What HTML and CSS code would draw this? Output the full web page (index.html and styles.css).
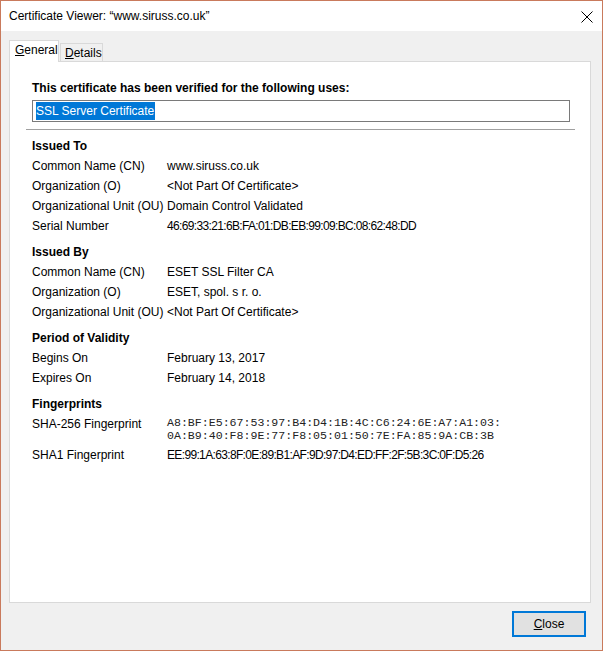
FILE: index.html
```html
<!DOCTYPE html>
<html lang="en">
<head>
<meta charset="utf-8">
<title>Certificate Viewer</title>
<link rel="stylesheet" href="styles.css">
</head>
<body>
<div class="window">
  <div class="titlebar">
    <span class="title">Certificate Viewer: &ldquo;www.siruss.co.uk&rdquo;</span>
    <svg class="closex" width="12" height="12" viewBox="0 0 12 12"><path d="M0.5 0.5 L11.5 11.5 M11.5 0.5 L0.5 11.5" stroke="#000" stroke-width="1" fill="none"/></svg>
  </div>
  <div class="client">
    <div class="tabs">
      <span class="tab active"><u>G</u>eneral</span>
      <span class="tab"><u>D</u>etails</span>
    </div>
    <div class="panel">
      <p class="verified">This certificate has been verified for the following uses:</p>
      <div class="uses"><span class="sel">SSL Server Certificate</span></div>
      <div class="sep"></div>

      <div class="section">
        <div class="head">Issued To</div>
        <div class="row"><span class="lbl">Common Name (CN)</span><span>www.siruss.co.uk</span></div>
        <div class="row"><span class="lbl">Organization (O)</span><span>&lt;Not Part Of Certificate&gt;</span></div>
        <div class="row"><span class="lbl">Organizational Unit (OU)</span><span>Domain Control Validated</span></div>
        <div class="row"><span class="lbl">Serial Number</span><span class="hex">46:69:33:21:6B:FA:01:DB:EB:99:09:BC:08:62:48:DD</span></div>
      </div>

      <div class="section">
        <div class="head">Issued By</div>
        <div class="row"><span class="lbl">Common Name (CN)</span><span>ESET SSL Filter CA</span></div>
        <div class="row"><span class="lbl">Organization (O)</span><span>ESET, spol. s r. o.</span></div>
        <div class="row"><span class="lbl">Organizational Unit (OU)</span><span>&lt;Not Part Of Certificate&gt;</span></div>
      </div>

      <div class="section">
        <div class="head">Period of Validity</div>
        <div class="row"><span class="lbl">Begins On</span><span>February 13, 2017</span></div>
        <div class="row"><span class="lbl">Expires On</span><span>February 14, 2018</span></div>
      </div>

      <div class="section">
        <div class="head">Fingerprints</div>
        <div class="row"><span class="lbl">SHA-256 Fingerprint</span><span class="mono">A8:BF:E5:67:53:97:B4:D4:1B:4C:C6:24:6E:A7:A1:03:<br>0A:B9:40:F8:9E:77:F8:05:01:50:7E:FA:85:9A:CB:3B</span></div>
        <div class="row"><span class="lbl">SHA1 Fingerprint</span><span class="hex">EE:99:1A:63:8F:0E:89:B1:AF:9D:97:D4:ED:FF:2F:5B:3C:0F:D5:26</span></div>
      </div>
    </div>
    <div class="buttons">
      <button class="btn"><u>C</u>lose</button>
    </div>
  </div>
</div>
</body>
</html>
```
FILE: styles.css
```css
body {
	margin: 0;
	font-family: "Liberation Sans", Arial, sans-serif;
	font-size: 12px;
	color: #000;
}
.window {
	width: 603px;
	height: 651px;
	box-sizing: border-box;
	border: 1px solid #c97a5c;
	display: flex;
	flex-direction: column;
	background: #f0f0f0;
}
.titlebar {
	height: 30px;
	background: #fff;
	display: flex;
	align-items: center;
	justify-content: space-between;
	padding: 0 9px 0 8px;
}
.title {
	font-size: 12px;
}
.closex {
	margin-top: 1px;
}
.client {
	flex: 1;
	display: flex;
	flex-direction: column;
	padding: 10px 11px 0 8px;
}
.tabs {
	display: flex;
	align-items: flex-end;
	height: 21px;
	margin-bottom: -1px;
}
.tab {
	box-sizing: border-box;
	height: 19px;
	width: 43px;
	border: 1px solid #d9d9d9;
	border-bottom: none;
	padding-left: 4px;
	line-height: 19px;
	background: #f0f0f0;
	margin-left: 1px;
}
.tab.active {
	height: 22px;
	width: 50px;
	padding-left: 5px;
	margin-left: 0;
	background: #fff;
	position: relative;
	z-index: 1;
}
.panel {
	height: 542px;
	box-sizing: border-box;
	background: #fff;
	border: 1px solid #d9d9d9;
	padding: 0 20px 0 22px;
}
.verified {
	margin: 16px 0 0;
	font-weight: bold;
	line-height: 20px;
}
.uses {
	margin-top: 2px;
	height: 22px;
	box-sizing: border-box;
	border: 1px solid #7a7a7a;
	padding-left: 3px;
	display: flex;
	align-items: center;
}
.sel {
	background: #0078d7;
	color: #fff;
	line-height: 18px;
	padding: 0 1px 0 0;
}
.sep {
	height: 1px;
	background: #a0a0a0;
	margin: 7px -5px 0 -6px;
}
.section {
	margin-top: 7px;
}
.head {
	font-weight: bold;
	line-height: 19px;
}
.row {
	display: flex;
	line-height: 20px;
}
.lbl {
	width: 135px;
	flex: none;
}
.hex {
	letter-spacing: -0.65px;
}
.mono {
	font-family: "Liberation Mono", "Courier New", monospace;
	font-size: 11.6px;
	line-height: 13px;
	padding: 2px 0 3px;
	color: #222;
}
.buttons {
	display: flex;
	justify-content: flex-end;
	padding: 8px 5px 0 0;
}
.btn {
	width: 74px;
	height: 26px;
	box-sizing: border-box;
	border: 2px solid #0078d7;
	background: #e1e1e1;
	font-family: "Liberation Sans", Arial, sans-serif;
	font-size: 12px;
	color: #000;
	padding: 0;
}
```
